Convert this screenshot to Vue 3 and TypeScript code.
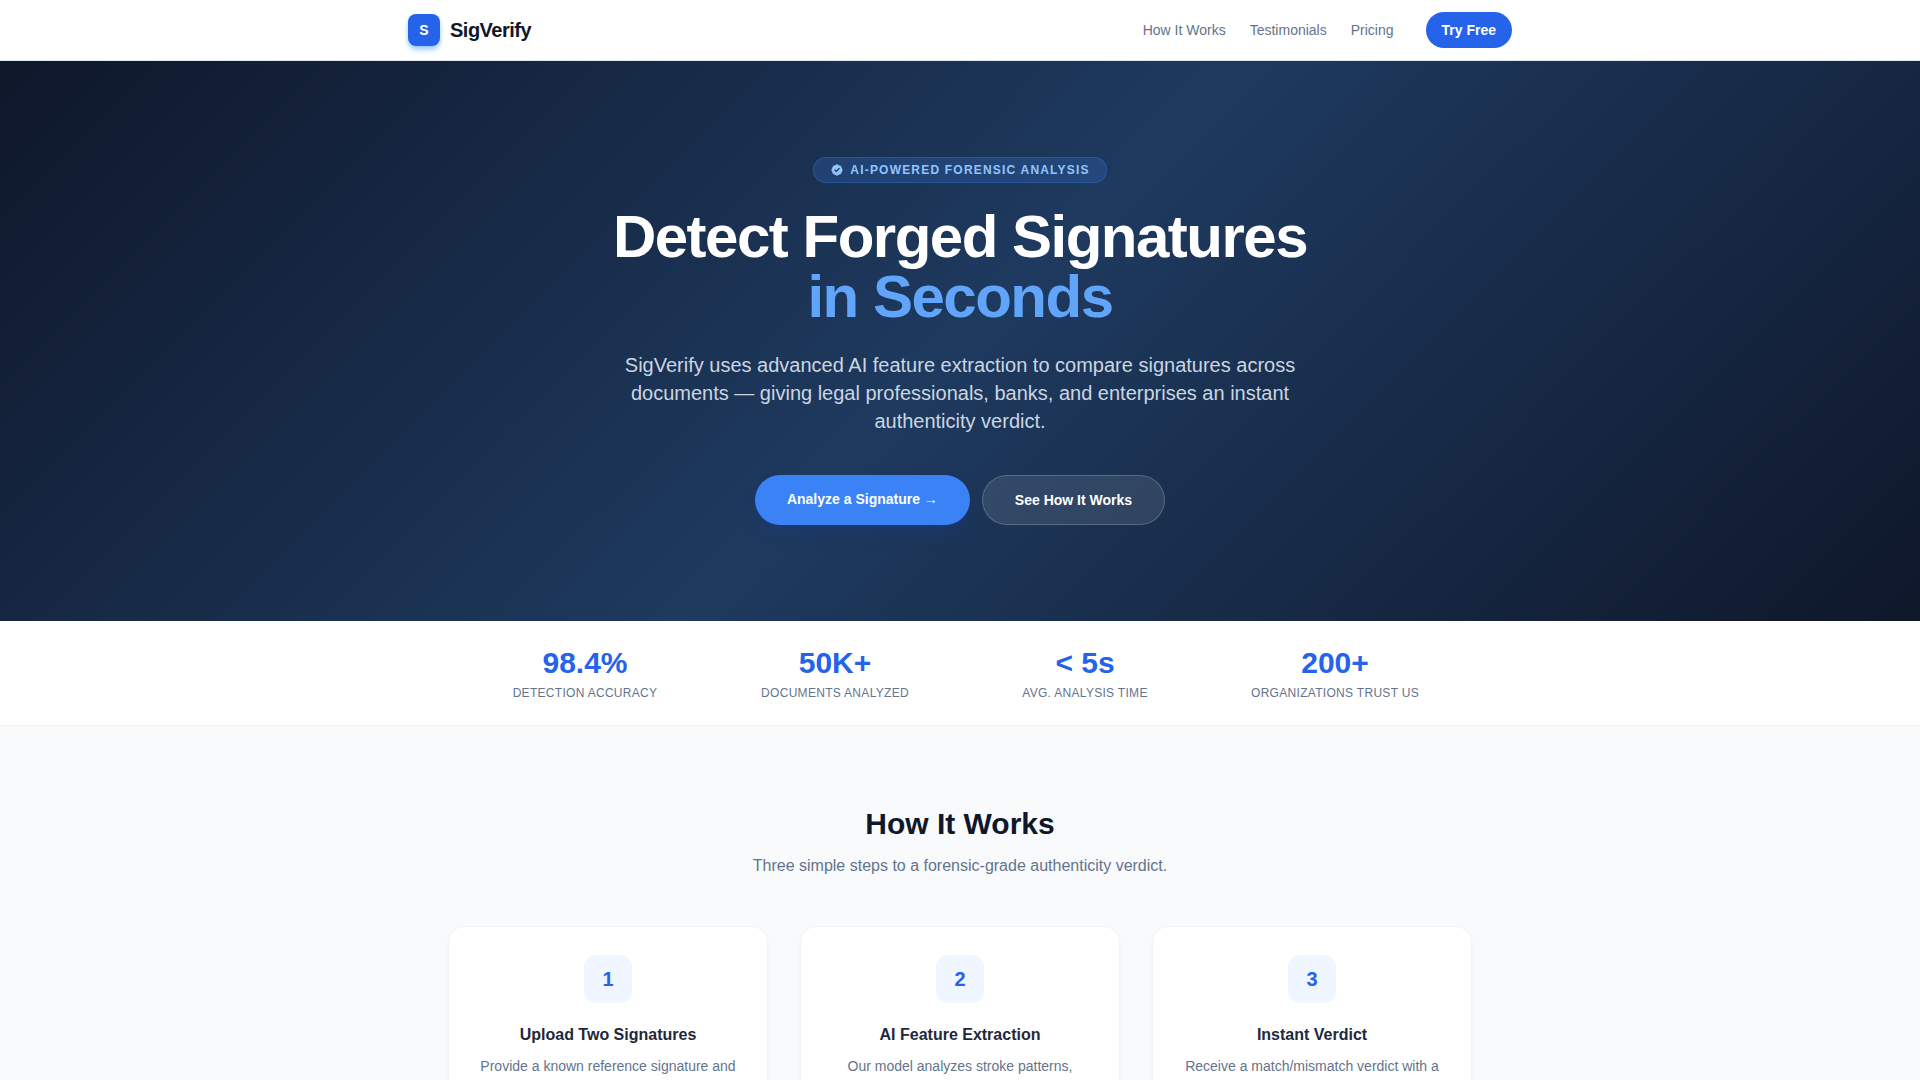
<script setup lang="ts">
interface Stat {
  value: string
  label: string
}

interface Step {
  title: string
  text: string
}

const stats: Stat[] = [
  { value: '98.4%', label: 'Detection Accuracy' },
  { value: '50K+', label: 'Documents Analyzed' },
  { value: '< 5s', label: 'Avg. Analysis Time' },
  { value: '200+', label: 'Organizations Trust Us' },
]

const steps: Step[] = [
  { title: 'Upload Two Signatures', text: 'Provide a known reference signature and' },
  { title: 'AI Feature Extraction', text: 'Our model analyzes stroke patterns,' },
  { title: 'Instant Verdict', text: 'Receive a match/mismatch verdict with a' },
]
</script>

<template>
  <div class="page">
    <header class="header">
      <div class="header-inner">
        <a class="brand" href="#">
          <span class="brand-mark">S</span>
          <span class="brand-name">SigVerify</span>
        </a>
        <nav class="nav">
          <a href="#how-it-works">How It Works</a>
          <a href="#testimonials">Testimonials</a>
          <a href="#pricing">Pricing</a>
          <button class="try-button" type="button">Try Free</button>
        </nav>
      </div>
    </header>

    <main>
      <section class="hero">
        <div class="badge">
          <svg class="badge-icon" viewBox="0 0 20 20" fill="currentColor" aria-hidden="true">
            <path
              fill-rule="evenodd"
              clip-rule="evenodd"
              d="M6.267 3.455a3.066 3.066 0 001.745-.723 3.066 3.066 0 013.976 0 3.066 3.066 0 001.745.723 3.066 3.066 0 012.812 2.812c.051.643.304 1.254.723 1.745a3.066 3.066 0 010 3.976 3.066 3.066 0 00-.723 1.745 3.066 3.066 0 01-2.812 2.812 3.066 3.066 0 00-1.745.723 3.066 3.066 0 01-3.976 0 3.066 3.066 0 00-1.745-.723 3.066 3.066 0 01-2.812-2.812 3.066 3.066 0 00-.723-1.745 3.066 3.066 0 010-3.976 3.066 3.066 0 00.723-1.745 3.066 3.066 0 012.812-2.812zm7.44 5.252a1 1 0 00-1.414-1.414L9 10.586 7.707 9.293a1 1 0 00-1.414 1.414l2 2a1 1 0 001.414 0l4-4z"
            />
          </svg>
          AI-Powered Forensic Analysis
        </div>
        <h1>Detect Forged Signatures<br /><span>in Seconds</span></h1>
        <p class="lead">
          SigVerify uses advanced AI feature extraction to compare signatures across documents — giving legal
          professionals, banks, and enterprises an instant authenticity verdict.
        </p>
        <div class="actions">
          <a class="action primary" href="#analyze">Analyze a Signature →</a>
          <a class="action secondary" href="#how-it-works">See How It Works</a>
        </div>
      </section>

      <section class="stats">
        <div class="stats-grid">
          <div v-for="stat in stats" :key="stat.label" class="stat">
            <div class="stat-value">{{ stat.value }}</div>
            <div class="stat-label">{{ stat.label }}</div>
          </div>
        </div>
      </section>

      <section id="how-it-works" class="how">
        <h2>How It Works</h2>
        <p class="how-lead">Three simple steps to a forensic-grade authenticity verdict.</p>
        <div class="steps">
          <article v-for="(step, index) in steps" :key="step.title" class="step">
            <div class="step-number">{{ index + 1 }}</div>
            <h3>{{ step.title }}</h3>
            <p>{{ step.text }}</p>
          </article>
        </div>
      </section>
    </main>
  </div>
</template>

<style>
body {
  margin: 0;
  background: #f8fafc;
}
</style>

<style scoped>
.page,
.page * {
  box-sizing: border-box;
}

.page {
  font-family: 'Liberation Sans', Arial, sans-serif;
  font-size: 16px;
  line-height: 24px;
  color: #1e293b;
}

h1,
h2,
h3,
p {
  margin: 0;
}

a {
  color: inherit;
  text-decoration: none;
}

.header {
  background: #fff;
  border-bottom: 1px solid #e2e8f0;
}

.header-inner {
  max-width: 1152px;
  margin: 0 auto;
  padding: 12px 24px;
  display: flex;
  align-items: center;
  justify-content: space-between;
}

.brand {
  display: flex;
  align-items: center;
  gap: 10px;
}

.brand-mark {
  width: 32px;
  height: 32px;
  display: flex;
  align-items: center;
  justify-content: center;
  border-radius: 8px;
  background: #2563eb;
  color: #fff;
  font-size: 14px;
  font-weight: 700;
  box-shadow: 0 4px 6px -1px #93c5fd, 0 2px 4px -2px #93c5fd;
}

.brand-name {
  font-size: 20px;
  line-height: 28px;
  font-weight: 700;
  letter-spacing: -0.025em;
  color: #0f172a;
}

.nav {
  display: flex;
  align-items: center;
  gap: 24px;
  font-size: 14px;
  line-height: 20px;
  color: #64748b;
}

.try-button {
  margin-left: 8px;
  padding: 8px 16px;
  border: 0;
  border-radius: 18px;
  background: #2563eb;
  color: #fff;
  font: inherit;
  font-weight: 600;
  cursor: pointer;
}

.hero {
  padding: 96px 24px;
  display: flex;
  flex-direction: column;
  align-items: center;
  text-align: center;
  background: linear-gradient(135deg, #0f172a 0%, #1e3a5f 50%, #0f172a 100%);
}

.badge {
  display: flex;
  align-items: center;
  gap: 6px;
  padding: 4px 16px;
  border: 1px solid rgba(59, 130, 246, 0.3);
  border-radius: 13px;
  background: rgba(59, 130, 246, 0.2);
  color: #93c5fd;
  font-size: 12px;
  line-height: 16px;
  font-weight: 600;
  letter-spacing: 0.1em;
  text-transform: uppercase;
}

.badge-icon {
  width: 14px;
  height: 14px;
}

h1 {
  margin-top: 24px;
  font-size: 60px;
  line-height: 60px;
  font-weight: 800;
  letter-spacing: -0.025em;
  color: #fff;
}

h1 span {
  color: #60a5fa;
}

.lead {
  max-width: 672px;
  margin-top: 24px;
  font-size: 20px;
  line-height: 28px;
  color: #cbd5e1;
}

.actions {
  margin-top: 40px;
  display: flex;
  flex-wrap: wrap;
  justify-content: center;
  gap: 12px;
}

.action {
  padding: 14px 32px;
  border-radius: 25px;
  color: #fff;
  font-size: 14px;
  line-height: 20px;
  font-weight: 600;
}

.primary {
  background: #3b82f6;
  box-shadow: 0 10px 15px -3px rgba(30, 58, 138, 0.4), 0 4px 6px -4px rgba(30, 58, 138, 0.4);
}

.secondary {
  border: 1px solid rgba(255, 255, 255, 0.2);
  background: rgba(255, 255, 255, 0.1);
}

.stats {
  background: #fff;
  border-bottom: 1px solid #f1f5f9;
}

.stats-grid {
  max-width: 1024px;
  margin: 0 auto;
  padding: 24px;
  display: grid;
  grid-template-columns: repeat(4, 1fr);
  gap: 24px;
  text-align: center;
}

.stat-value {
  font-size: 30px;
  line-height: 36px;
  font-weight: 800;
  color: #2563eb;
}

.stat-label {
  margin-top: 4px;
  font-size: 12px;
  line-height: 16px;
  letter-spacing: 0.025em;
  text-transform: uppercase;
  color: #64748b;
}

.how {
  padding: 80px 24px;
  text-align: center;
}

h2 {
  font-size: 30px;
  line-height: 36px;
  font-weight: 700;
  color: #0f172a;
}

.how-lead {
  margin-top: 12px;
  color: #64748b;
}

.steps {
  max-width: 1024px;
  margin: 48px auto 0;
  display: grid;
  grid-template-columns: repeat(3, 1fr);
  gap: 32px;
}

.step {
  padding: 28px;
  display: flex;
  flex-direction: column;
  align-items: center;
  border: 1px solid #f1f5f9;
  border-radius: 16px;
  background: #fff;
  box-shadow: 0 1px 2px rgba(0, 0, 0, 0.05);
}

.step-number {
  width: 48px;
  height: 48px;
  display: flex;
  align-items: center;
  justify-content: center;
  border-radius: 12px;
  background: #eff6ff;
  color: #2563eb;
  font-size: 20px;
  font-weight: 700;
}

h3 {
  margin-top: 20px;
  font-size: 16px;
  font-weight: 700;
}

.step p {
  margin-top: 8px;
  font-size: 14px;
  line-height: 22px;
  color: #64748b;
}
</style>
